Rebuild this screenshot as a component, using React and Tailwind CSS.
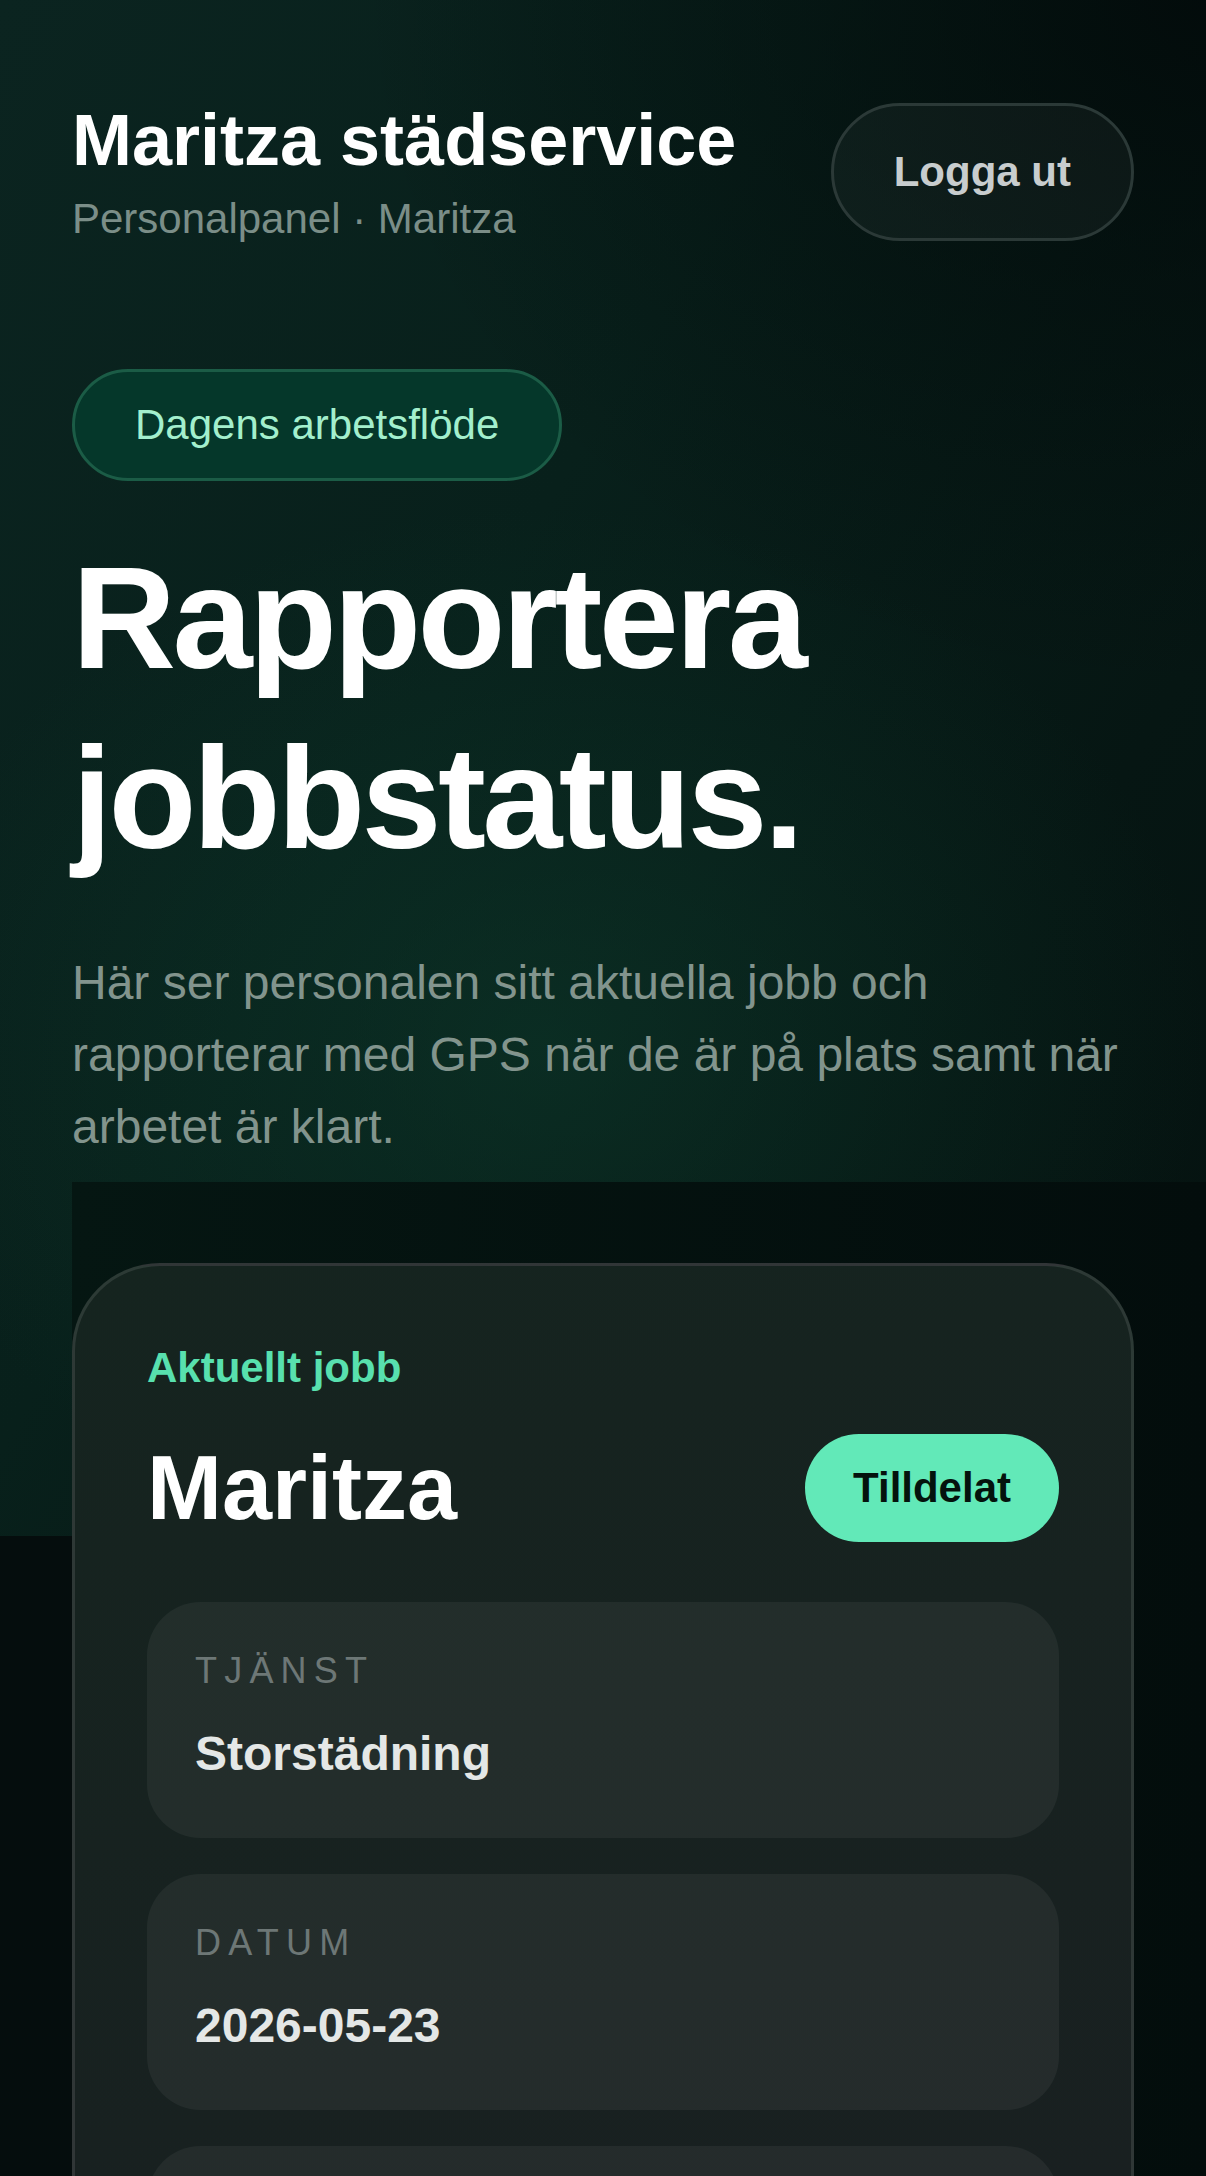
import React from "react";

function InfoBox({ label, value }) {
  return (
    <div className="rounded-[54px] bg-white/[0.05] px-[48px] pt-[45px] pb-[48px]">
      <p className="text-[36px] leading-[48px] tracking-[0.2em] uppercase text-[#6d7776]">{label}</p>
      <p className="mt-[23px] text-[48px] leading-[72px] font-bold text-[#e4e7e6]">{value}</p>
    </div>
  );
}

export default function App() {
  return (
    <div className="min-h-screen bg-[#050d0d] font-['Liberation_Sans',Arial,sans-serif]">
      <section className="h-[1536px] px-[72px] pt-[95px] [background-image:radial-gradient(ellipse_55%_35%_at_45%_68%,rgba(14,62,46,0.5),transparent),radial-gradient(ellipse_70%_45%_at_100%_0%,rgba(2,9,9,0.85),transparent),linear-gradient(120deg,#0b2420_0%,#08201b_40%,#061613_75%,#051210_100%)]">
        <header className="flex items-center justify-between">
          <div>
            <h1 className="text-[72px] leading-[90px] font-bold text-white">Maritza städservice</h1>
            <p className="mt-[4px] text-[42px] leading-[60px] text-[#7b8e88]">Personalpanel · Maritza</p>
          </div>
          <button className="rounded-full border-[3px] border-[#2b3937] bg-white/[0.04] px-[60px] py-[36px] text-[42px] leading-[60px] font-bold text-[#c8cdce]">
            Logga ut
          </button>
        </header>

        <div className="mt-[120px] inline-flex rounded-full border-[3px] border-[#1b5c46] bg-[#05372a] px-[60px] py-[23px] text-[42px] leading-[60px] text-[#a3efcd]">
          Dagens arbetsflöde
        </div>

        <h2 className="mt-[48px] text-[144px] leading-[180px] font-bold tracking-[-0.025em] text-white">
          Rapportera jobbstatus.
        </h2>

        <p className="mt-[58px] text-[48px] leading-[72px] text-[#82948d]">
          Här ser personalen sitt aktuella jobb och rapporterar med GPS när de är på plats samt när arbetet är klart.
        </p>

        <div className="mt-[19px] -mr-[72px] pt-[81px] [background-image:linear-gradient(90deg,#051612,#030d0c)]">
          <div className="w-[1062px] rounded-[88px] border-[3px] border-white/10 p-[72px] [background-image:linear-gradient(165deg,#15241f,#1a1f21)]">
            <p className="text-[42px] leading-[60px] font-bold text-[#58e0ae]">Aktuellt jobb</p>
            <div className="mt-[36px] flex items-center justify-between">
              <h3 className="text-[90px] leading-[108px] font-bold text-white">Maritza</h3>
              <span className="rounded-full bg-[#62e9b8] px-[48px] py-[24px] text-[42px] leading-[60px] font-bold text-[#04130d]">
                Tilldelat
              </span>
            </div>
            <div className="mt-[60px] flex flex-col gap-[36px]">
              <InfoBox label="Tjänst" value="Storstädning" />
              <InfoBox label="Datum" value="2026-05-23" />
              <InfoBox label="Adress" value="Storgatan 12" />
            </div>
          </div>
        </div>
      </section>
    </div>
  );
}
